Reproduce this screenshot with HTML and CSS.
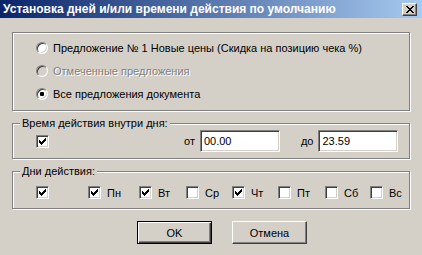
FILE: index.html
```html
<!DOCTYPE html>
<html lang="ru">
<head>
<meta charset="utf-8">
<title>Установка дней и/или времени действия по умолчанию</title>
<link rel="stylesheet" href="styles.css">
</head>
<body>
<div class="window">
  <div class="titlebar">
    <span class="title">Установка дней и/или времени действия по умолчанию</span>
    <span class="close"><svg width="8" height="7" viewBox="0 0 8 7" shape-rendering="crispEdges"><path d="M0 0h2v1h-2z M6 0h2v1h-2z M1 1h2v1h-2z M5 1h2v1h-2z M2 2h4v1h-4z M3 3h2v1h-2z M2 4h4v1h-4z M1 5h2v1h-2z M5 5h2v1h-2z M0 6h2v1h-2z M6 6h2v1h-2z" fill="#000"/></svg></span>
  </div>
  <div class="body">
    <div class="group group-offers">
      <div class="radio-row"><span class="radio"></span><span class="txt">Предложение № 1 Новые цены (Скидка на позицию чека %)</span></div>
      <div class="radio-row disabled"><span class="radio"></span><span class="txt">Отмеченные предложения</span></div>
      <div class="radio-row"><span class="radio checked"><span class="dot"></span></span><span class="txt">Все предложения документа</span></div>
    </div>

    <div class="group group-time">
      <span class="legend">Время действия внутри дня:</span>
      <div class="time-row">
        <span class="check on"><svg width="7" height="7" viewBox="0 0 7 7" shape-rendering="crispEdges"><path d="M6 0h1v1h-1z M5 1h2v1h-2z M0 2h1v1h-1z M4 2h3v1h-3z M0 3h2v1h-2z M3 3h3v1h-3z M0 4h5v1h-5z M1 5h3v1h-3z M2 6h1v1h-1z" fill="#000"/></svg></span>
        <span class="lbl-from">от</span>
        <span class="field">00.00</span>
        <span class="lbl-to">до</span>
        <span class="field">23.59</span>
      </div>
    </div>

    <div class="group group-days">
      <span class="legend">Дни действия:</span>
      <div class="days">
        <div class="day"><span class="check on"><svg width="7" height="7" viewBox="0 0 7 7" shape-rendering="crispEdges"><path d="M6 0h1v1h-1z M5 1h2v1h-2z M0 2h1v1h-1z M4 2h3v1h-3z M0 3h2v1h-2z M3 3h3v1h-3z M0 4h5v1h-5z M1 5h3v1h-3z M2 6h1v1h-1z" fill="#000"/></svg></span></div>
        <div class="day"><span class="check on"><svg width="7" height="7" viewBox="0 0 7 7" shape-rendering="crispEdges"><path d="M6 0h1v1h-1z M5 1h2v1h-2z M0 2h1v1h-1z M4 2h3v1h-3z M0 3h2v1h-2z M3 3h3v1h-3z M0 4h5v1h-5z M1 5h3v1h-3z M2 6h1v1h-1z" fill="#000"/></svg></span><span class="txt">Пн</span></div>
        <div class="day"><span class="check on"><svg width="7" height="7" viewBox="0 0 7 7" shape-rendering="crispEdges"><path d="M6 0h1v1h-1z M5 1h2v1h-2z M0 2h1v1h-1z M4 2h3v1h-3z M0 3h2v1h-2z M3 3h3v1h-3z M0 4h5v1h-5z M1 5h3v1h-3z M2 6h1v1h-1z" fill="#000"/></svg></span><span class="txt">Вт</span></div>
        <div class="day"><span class="check"></span><span class="txt">Ср</span></div>
        <div class="day"><span class="check on"><svg width="7" height="7" viewBox="0 0 7 7" shape-rendering="crispEdges"><path d="M6 0h1v1h-1z M5 1h2v1h-2z M0 2h1v1h-1z M4 2h3v1h-3z M0 3h2v1h-2z M3 3h3v1h-3z M0 4h5v1h-5z M1 5h3v1h-3z M2 6h1v1h-1z" fill="#000"/></svg></span><span class="txt">Чт</span></div>
        <div class="day"><span class="check"></span><span class="txt">Пт</span></div>
        <div class="day"><span class="check"></span><span class="txt">Сб</span></div>
        <div class="day"><span class="check"></span><span class="txt">Вс</span></div>
      </div>
    </div>

    <div class="buttons">
      <span class="btn default">OK</span>
      <span class="btn">Отмена</span>
    </div>
  </div>
</div>
</body>
</html>
```

FILE: styles.css
```css
* { box-sizing: border-box; }
html, body { margin: 0; padding: 0; }
body {
  width: 422px;
  height: 255px;
  background: #d4d0c8;
  font-family: "Liberation Sans", Arial, sans-serif;
  font-size: 11px;
  color: #000;
  overflow: hidden;
}
.window { width: 422px; height: 255px; display: flex; flex-direction: column; }

.titlebar {
  height: 18px;
  background: linear-gradient(to right, #0a246a 0%, #a6caf0 100%);
  display: flex;
  align-items: center;
  justify-content: space-between;
  padding: 0 5px 0 3px;
}
.title {
  color: #fff;
  font-weight: bold;
  font-size: 12px;
  white-space: nowrap;
  line-height: 18px;
}
.close {
  width: 15px;
  height: 13px;
  background: #d4d0c8;
  border: 1px solid;
  border-color: #fff #404040 #404040 #fff;
  box-shadow: inset -1px -1px 0 #808080;
  display: flex;
  align-items: center;
  justify-content: center;
  margin-top: 1px;
}
.close svg { display: block; }

.body { display: flex; flex-direction: column; padding: 14px 12px 0 12px; }

.group {
  position: relative;
  border: 1px solid #808080;
  box-shadow: 1px 1px 0 #fff, inset 1px 1px 0 #fff;
}
.group-offers { height: 79px; padding: 3px 0 0 23px; }
.group-time { height: 36px; margin-top: 12px; padding: 6px 0 0 23px; }
.group-days { height: 38px; margin-top: 12px; padding: 14px 0 0 23px; }

.legend {
  position: absolute;
  left: 7px;
  top: -7px;
  padding: 0 2px;
  background: #d4d0c8;
  line-height: 13px;
  white-space: nowrap;
}

.radio-row { height: 23px; display: flex; align-items: center; }
.radio-row .txt { margin-left: 5px; white-space: nowrap; }
.radio {
  width: 12px;
  height: 12px;
  border-radius: 50%;
  background: #fff;
  border: 1px solid;
  border-color: #808080 #fff #fff #808080;
  box-shadow: inset 1px 1px 0 #404040, inset -1px -1px 0 #d4d0c8;
  display: flex;
  align-items: center;
  justify-content: center;
  flex: none;
}
.radio .dot { width: 4px; height: 4px; border-radius: 1px; background: #000; }
.disabled .radio { background: #d4d0c8; }
.disabled .txt { color: #808080; text-shadow: 1px 1px 0 #fff; }

.check {
  width: 13px;
  height: 13px;
  background: #fff;
  border: 1px solid;
  border-color: #808080 #fff #fff #808080;
  box-shadow: inset 1px 1px 0 #404040, inset -1px -1px 0 #d4d0c8;
  display: flex;
  align-items: center;
  justify-content: center;
  flex: none;
}
.check svg { display: block; }

.time-row { display: flex; align-items: center; height: 22px; }
.lbl-from { margin-left: 135px; }
.field {
  width: 80px;
  height: 22px;
  background: #fff;
  border: 1px solid;
  border-color: #808080 #fff #fff #808080;
  box-shadow: inset 1px 1px 0 #404040, inset -1px -1px 0 #d4d0c8;
  padding: 0 0 0 3px;
  line-height: 20px;
  margin-left: 5px;
}
.lbl-to { margin-left: 21px; }

.days {
  display: grid;
  grid-template-columns: 52px 51px 47px 46px 46px 47px 45px auto;
  align-items: center;
}
.day { display: flex; align-items: center; }
.day .txt { margin-left: 6px; }

.buttons { display: flex; gap: 20px; padding-left: 125px; margin-top: 12px; }
.btn {
  width: 75px;
  height: 23px;
  display: flex;
  align-items: center;
  justify-content: center;
  border: 1px solid;
  border-color: #fff #404040 #404040 #fff;
  box-shadow: inset -1px -1px 0 #808080;
}
.btn.default {
  border: 1px solid #000;
  box-shadow: inset 1px 1px 0 #fff, inset -1px -1px 0 #404040, inset -2px -2px 0 #808080;
}
```
